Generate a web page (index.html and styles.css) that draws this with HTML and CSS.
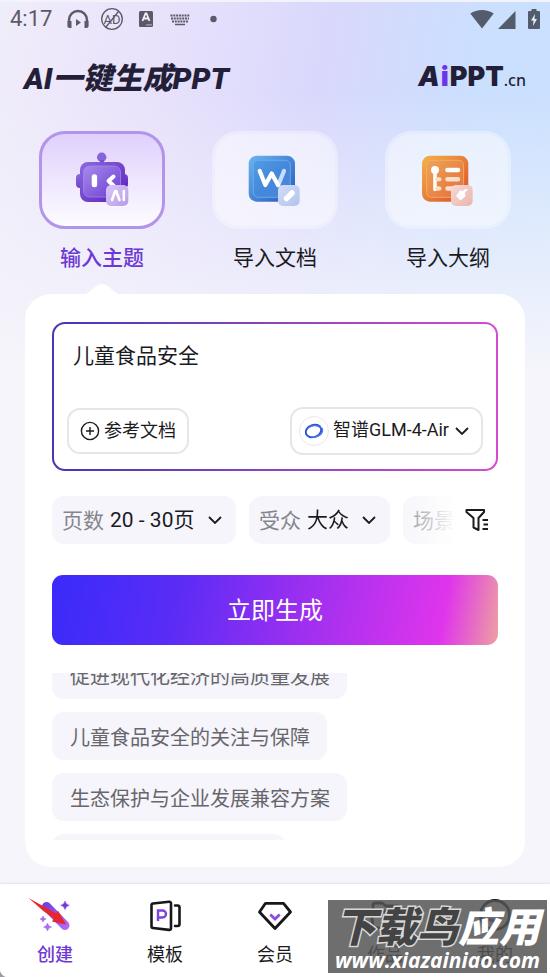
FILE: index.html
```html
<!DOCTYPE html>
<html lang="zh-CN">
<head>
<meta charset="utf-8">
<meta name="viewport" content="width=device-width, initial-scale=1">
<title>AI一键生成PPT</title>
<link rel="stylesheet" href="styles.css">
</head>
<body>
<div class="app">
  <div class="status">
    <span class="clock">4:17</span>
    <div class="status-left">
      <svg width="24" height="24" viewBox="0 0 24 24"><path d="M3 20V13a9 9 0 0 1 18 0v7" fill="none" stroke="currentColor" stroke-width="2.4"/><path d="M1.500 14h4v7h-2a2 2 0 0 1-2-2zM22.500 14h-4v7h2a2 2 0 0 0 2-2zM10 12l5 3.500-5 3.500z" fill="currentColor"/></svg>
      <svg width="24" height="24" viewBox="0 0 24 24" fill="none" stroke="currentColor" stroke-width="1.300"><circle cx="12" cy="12" r="10.300"/><path d="M18.500 4.500 6 20"/><text x="12" y="16.500" class="ad">AD</text></svg>
      <svg width="24" height="24" viewBox="0 0 24 24"><rect x="5" y="4" width="14" height="16" rx="1.500" fill="currentColor"/><path d="m8.500 14 3-7.500h1l3 7.500M9.500 11.500h5" fill="none" stroke="#f0edfb" stroke-width="1.800"/><path d="M12.500 17.800h1m1 0h1m1 0h1" stroke="#f0edfb" stroke-width="1.300"/></svg>
      <svg width="24" height="24" viewBox="0 0 24 24" fill="none" stroke="currentColor"><path d="M2.500 8.500h19M3 11.500h18M4 14.500h16" stroke-width="2" stroke-dasharray="2 .8"/><path d="M7 17.500h10" stroke-width="1.600"/></svg>
      <svg width="24" height="24" viewBox="0 0 24 24"><circle cx="11.500" cy="12" r="3.200" fill="currentColor"/></svg>
    </div>
    <div class="status-right">
      <svg width="24" height="22" viewBox="0 0 24 22"><path d="M12 20.500.3 5.500C7 .8 17 .8 23.700 5.500z" fill="currentColor"/></svg>
      <svg width="18" height="22" viewBox="0 0 18 22"><path d="M17.500 3v18H0z" fill="currentColor"/></svg>
      <svg class="battery" width="12" height="22" viewBox="0 0 12 22"><path d="M3.500 1h5v2H11q1 0 1 1v16q0 1-1 1H1q-1 0-1-1V4q0-1 1-1h2.500z" fill="currentColor"/><path d="M7 6 3 12.500h2.500L5 18l4-7H6.500z" fill="#e5f0ff"/></svg>
    </div>
  </div>

  <header class="head">
    <h1 class="title">AI一键生成PPT</h1>
    <div class="brand"><span class="brand-a">A</span><span class="brand-i">i</span>PPT<span class="brand-cn">.cn</span></div>
  </header>

  <div class="modes">
    <button class="mode mode-on">
      <span class="tile">
        <svg width="56" height="56" viewBox="0 0 56 56">
          <defs>
            <linearGradient id="p1" x1="0" y1="0" x2="1" y2="1"><stop offset="0" stop-color="#8b6ae2"/><stop offset="1" stop-color="#5b22b8"/></linearGradient>
            <linearGradient id="p2" x1="0" y1="0" x2="1" y2="1"><stop offset="0" stop-color="#a78bec"/><stop offset="1" stop-color="#6b3cd0"/></linearGradient>
            <linearGradient id="p3" x1="0" y1="0" x2="1" y2="1"><stop offset="0" stop-color="#d9c8f8"/><stop offset="1" stop-color="#b99be9"/></linearGradient>
          </defs>
          <circle cx="27.700" cy="5.200" r="4.700" fill="#8865d6"/><path d="M26 8h4v4h-4z" fill="#7650cf"/>
          <rect x="2" y="22" width="52" height="14" rx="4" fill="url(#p1)"/>
          <rect x="6" y="10" width="45" height="40" rx="8" fill="url(#p1)"/>
          <rect x="9.500" y="14" width="37" height="31" rx="6" fill="url(#p2)" stroke="#a78ceb" stroke-width=".7"/>
          <rect x="17.700" y="22.300" width="5.400" height="13" rx="2.500" fill="#fff"/>
          <path d="m39.500 24.500-5 4.500 5 4.500" fill="none" stroke="#fff" stroke-width="4" stroke-linecap="round" stroke-linejoin="round"/>
          <rect x="32" y="33" width="22.300" height="21" rx="5" fill="url(#p3)"/>
          <path d="m38 48 3.200-9h1l3.300 9M49.800 39v9" fill="none" stroke="#fff" stroke-width="2.600" stroke-linecap="round" stroke-linejoin="round"/>
        </svg>
      </span>
      <span class="mode-name">输入主题</span>
    </button>
    <button class="mode">
      <span class="tile">
        <svg width="56" height="56" viewBox="0 0 56 56">
          <defs>
            <linearGradient id="b1" x1="0" y1="0" x2="1" y2="1"><stop offset="0" stop-color="#6bb5ef"/><stop offset="1" stop-color="#2459bd"/></linearGradient>
            <linearGradient id="b2" x1="0" y1="0" x2="1" y2="1"><stop offset="0" stop-color="#4f9de6"/><stop offset=".5" stop-color="#4588da"/><stop offset="1" stop-color="#4b83dc"/></linearGradient>
            <linearGradient id="b3" x1="0" y1="0" x2="1" y2="1"><stop offset="0" stop-color="#d3ddf8"/><stop offset="1" stop-color="#b3c2ee"/></linearGradient>
          </defs>
          <rect x="1.700" y="3.700" width="46.300" height="46" rx="8" fill="url(#b1)"/>
          <rect x="6.300" y="8.300" width="37" height="37" rx="5" fill="url(#b2)" stroke="#72b0ef" stroke-width=".8"/>
          <path d="m31.300 33 5.700-14" fill="none" stroke="#c7def8" stroke-width="4.200" stroke-linecap="round"/>
          <path d="m12.700 19 5.600 14 6.400-11.500L31 33" fill="none" stroke="#fff" stroke-width="4.200" stroke-linecap="round" stroke-linejoin="round"/>
          <rect x="31" y="33" width="21.700" height="21" rx="5" fill="url(#b3)"/>
          <path d="m39.500 46.500 5.500-5.500" stroke="#fff" stroke-width="5.500" stroke-linecap="round"/>
        </svg>
      </span>
      <span class="mode-name">导入文档</span>
    </button>
    <button class="mode">
      <span class="tile">
        <svg width="56" height="56" viewBox="0 0 56 56">
          <defs>
            <linearGradient id="o1" x1="0" y1="0" x2="1" y2="1"><stop offset="0" stop-color="#f4b24a"/><stop offset="1" stop-color="#da4d26"/></linearGradient>
            <linearGradient id="o2" x1="0" y1="0" x2="1" y2="1"><stop offset="0" stop-color="#efa353"/><stop offset="1" stop-color="#e3703c"/></linearGradient>
            <linearGradient id="o3" x1="0" y1="0" x2="1" y2="1"><stop offset="0" stop-color="#f6d9d6"/><stop offset="1" stop-color="#eab5ad"/></linearGradient>
          </defs>
          <rect x="2" y="3.700" width="46.300" height="46" rx="8" fill="url(#o1)"/>
          <rect x="6.600" y="8.300" width="37" height="37" rx="5" fill="url(#o2)" stroke="#f3b56b" stroke-width=".8"/>
          <circle cx="15" cy="18" r="4" fill="#fff"/>
          <path d="M15 18v19.500M15 36.500h4" stroke="#fff" stroke-width="3.600" stroke-linecap="round"/>
          <path d="M17 27.300h2.500M17 36.500h2.500" stroke="#fbe0cc" stroke-width="4" stroke-linecap="round"/>
          <path d="M27.500 18H38" stroke="#fff" stroke-width="4.600" stroke-linecap="round"/>
          <path d="M27.500 27.300H38M27.500 36.500H36" stroke="#fbdfcc" stroke-width="4.600" stroke-linecap="round"/>
          <rect x="31" y="33" width="21.700" height="21" rx="5" fill="url(#o3)"/>
          <path d="m36.500 44 4-5.500 1 1.500q2.500-2.500 6-2.500-3 2-3.500 5l1.500 1-5 4.500z" fill="#fff" stroke="#fff" stroke-linejoin="round"/>
        </svg>
      </span>
      <span class="mode-name">导入大纲</span>
    </button>
  </div>

  <main class="panel">
    <svg class="notch" width="42" height="14" viewBox="0 0 42 14"><path d="M0 14Q4 13 8 10L16 3.500Q21 0 26 3.500L34 10Q38 13 42 14z" fill="#fff"/></svg>

    <div class="prompt">
      <textarea class="topic" rows="1" aria-label="主题">儿童食品安全</textarea>
      <div class="prompt-row">
        <button class="pill">
          <svg width="20" height="20" viewBox="0 0 20 20" fill="none" stroke="currentColor" stroke-width="1.400"><circle cx="10" cy="10" r="8.600"/><path d="M10 6v8M6 10h8"/></svg>
          <span class="pill-text">参考文档</span>
        </button>
        <label class="pill pill-model">
          <span class="model-logo"><svg width="20" height="18" viewBox="0 0 20 18" fill="none" stroke="#2b50d8"><ellipse cx="9.500" cy="9" rx="8" ry="6" transform="rotate(-20 9.500 9)" stroke-width="2"/><path d="M4 6q7-5 13 0M18 6q2 5-4 8-4 2-7 1" stroke="#4f75e6" stroke-width="1.400"/></svg></span>
          <select class="model pill-text" aria-label="模型"><option>智谱GLM-4-Air</option></select>
          <svg class="chev" width="14" height="8" viewBox="0 0 14 8"><path d="m1 1 6 6 6-6"/></svg>
        </label>
      </div>
    </div>

    <div class="filters">
      <div class="filter-scroll">
        <label class="filter"><span class="filter-name">页数</span>
          <select class="pick"><option>20 - 30页</option></select>
          <svg class="chev" width="14" height="8" viewBox="0 0 14 8"><path d="m1 1 6 6 6-6"/></svg>
        </label>
        <label class="filter"><span class="filter-name">受众</span>
          <select class="pick"><option>大众</option></select>
          <svg class="chev" width="14" height="8" viewBox="0 0 14 8"><path d="m1 1 6 6 6-6"/></svg>
        </label>
        <button class="filter filter-more"><span class="filter-name">场景</span></button>
      </div>
      <button class="funnel" aria-label="筛选">
        <svg width="24" height="24" viewBox="0 0 24 24" fill="none" stroke="currentColor" stroke-width="2" stroke-linejoin="round"><path d="M1.500 2h17.500v2l-5.500 6v12l-5-2.500V10L1.500 4z"/><path d="M17.500 12H23M18.500 16.500H23M17.500 21H23"/></svg>
      </button>
    </div>

    <button class="generate">立即生成</button>

    <div class="ideas">
      <button class="idea">促进现代化经济的高质量发展</button>
      <button class="idea">儿童食品安全的关注与保障</button>
      <button class="idea">生态保护与企业发展兼容方案</button>
      <span class="idea idea-next"></span>
    </div>
  </main>

  <nav class="tabs">
    <a class="tab tab-on" href="#create">
      <svg width="56" height="40" viewBox="0 0 56 40">
        <defs><linearGradient id="n1" gradientUnits="userSpaceOnUse" x1="17" y1="8" x2="40" y2="32"><stop offset="0" stop-color="#7040e0"/><stop offset="1" stop-color="#b26af5"/></linearGradient></defs>
        <path d="M19.500 10.500 38 29.500" stroke="url(#n1)" stroke-width="9" stroke-linecap="round"/>
        <path d="M38 5q.8 3.700 4.300 4.300-3.500.6-4.300 4.300-.8-3.700-4.300-4.300 3.500-.6 4.300-4.300z" fill="#6a3ae0" stroke="#6a3ae0" stroke-width=".5"/>
        <path d="M16 20q.5 2.500 3 3-2.500.5-3 3-.5-2.500-3-3 2.500-.5 3-3zM20.500 27q.7 3.300 4 4-3.300.7-4 4-.7-3.300-4-4 3.300-.7 4-4z" fill="#a76af0" stroke="#a76af0" stroke-width=".6"/>
        <path d="M1.500 2 29.500 17.500l1.500-3L39 28.500l-14-3 2-3L17 15.500z" fill="#e8262b"/>
      </svg>
      创建
    </a>
    <a class="tab" href="#templates">
      <svg width="56" height="40" viewBox="0 0 56 40" fill="none" stroke="#17171b" stroke-width="2.600" stroke-linejoin="round" stroke-linecap="round"><path d="m16 7.500 16-1.700q2-.2 2 1.800v24.600q0 2-2 1.700L16 32q-1.500-.2-1.500-1.800V9.300q0-1.600 1.500-1.800zM38 9.500h2.500q2 0 2 2V28q0 2-2 2H38"/><path d="M21 25V14.500h4.500a3.300 3.300 0 0 1 0 7H21" stroke="#7b43e0" stroke-width="2.400" stroke-linecap="butt" stroke-linejoin="miter"/></svg>
      模板
    </a>
    <a class="tab" href="#vip">
      <svg width="56" height="40" viewBox="0 0 56 40" fill="none" stroke="#17171b" stroke-width="2.800" stroke-linejoin="round" stroke-linecap="round"><path d="M18.500 7.300h18L43.500 16 28 32.500 12.500 16z"/><path d="m23.300 18.500 4.700 4.500 4.700-4.500" stroke="#8a4be8" stroke-linecap="butt" stroke-linejoin="miter"/></svg>
      会员
    </a>
    <a class="tab" href="#works">
      <svg width="56" height="40" viewBox="0 0 56 40" fill="none" stroke="#17171b" stroke-width="2.800" stroke-linejoin="round"><path d="M16 14V9q0-2 2-2h7l4 3h11q2 0 2 2v3M14 15h29l-2 15q0 2-2 2H18q-2 0-2-2z"/><path d="M23 20h10" stroke="#7b43e0"/></svg>
      作品
    </a>
    <a class="tab" href="#me">
      <svg width="56" height="40" viewBox="0 0 56 40" fill="none" stroke="#17171b" stroke-width="2.800"><circle cx="28" cy="19" r="14.500"/><path d="M22 23q6 4 12 0" stroke="#7b43e0"/></svg>
      我的
    </a>
    <div class="mark">
      <div class="mark-name"><span class="mark-dark">下载鸟</span>应用</div>
      <div class="mark-url">www.xiazainiao.com</div>
    </div>
  </nav>
</div>
</body>
</html>
```

FILE: styles.css
```css
* {
  box-sizing: border-box;
}

html {
  background: #9d9da0;
}

body {
  margin: 0;
  font-family: Roboto, "Noto Sans CJK SC", sans-serif;
  font-size: 21px;
  color: #1b1b1f;
}

button,
select,
textarea {
  margin: 0;
  padding: 0;
  border: 0;
  background: none;
  font: inherit;
  color: inherit;
}

svg {
  display: block;
  flex: none;
}

.app {
  display: flex;
  flex-direction: column;
  height: 100vh;
  min-height: 900px;
  overflow: hidden;
  border-top: 2px solid #f3f3fb;
  border-radius: 0 0 0 8px;
  background:
    linear-gradient(to bottom, rgba(245, 245, 251, 0) 90px, #f5f5fb 370px) no-repeat,
    linear-gradient(100deg, #f0edfa 0%, #e9e2fb 22%, #d9d8fc 46%, #cbdffe 68%, #c9e2ff 100%);
}

.status {
  display: flex;
  align-items: center;
  height: 34px;
  padding: 0 10px;
  color: #5c5a68;
}

.clock {
  width: 56px;
  font-size: 22px;
  line-height: 34px;
}

.status-left {
  display: flex;
  gap: 10px;
}

.ad {
  font-size: 13px;
  text-anchor: middle;
  stroke-width: 0;
  fill: currentColor;
}

.status-right {
  display: flex;
  gap: 4px;
  margin-left: auto;
  color: #525c6b;
}

.battery {
  margin-left: 8px;
}

.head {
  display: flex;
  align-items: center;
  justify-content: space-between;
  height: 82px;
  padding: 3px 24px 0;
}

.title {
  margin: 0;
  font-size: 30px;
  font-weight: 900;
  font-style: italic;
  line-height: 36px;
  color: #231f38;
}

.brand {
  font-family: Inter, sans-serif;
  font-size: 27px;
  font-weight: 900;
  line-height: 36px;
  color: #231f38;
}

.brand-a {
  font-style: italic;
}

.brand-i {
  margin: 0 1px;
  color: #6c35e8;
}

.brand-cn {
  font-family: "Noto Sans", sans-serif;
  font-size: 16px;
  font-weight: 500;
}

.modes {
  display: flex;
  justify-content: space-between;
  padding: 13px 39px 0;
}

.mode {
  display: flex;
  flex-direction: column;
  align-items: center;
  gap: 13px;
}

.tile {
  display: grid;
  place-items: center;
  width: 126px;
  height: 98px;
  border: 3px solid rgba(255, 255, 255, .35);
  border-radius: 26px;
  background: rgba(255, 255, 255, .5);
  background-clip: padding-box;
}

.mode-on .tile {
  border-color: #b295ea;
  background: linear-gradient(#e0d0fd, #fdfcff);
}

.mode-name {
  line-height: 32px;
}

.mode-on .mode-name {
  font-weight: 500;
  color: #6d38d4;
}

.panel {
  position: relative;
  display: flex;
  flex: 1;
  flex-direction: column;
  min-height: 0;
  margin: 20px 25px 17px;
  padding: 28px 27px 27px;
  border-radius: 26px;
  background: #fff;
}

.notch {
  position: absolute;
  top: -12px;
  left: 56px;
}

.prompt {
  display: flex;
  flex-direction: column;
  justify-content: space-between;
  height: 149px;
  padding: 16px 13px 14px;
  border: 2px solid transparent;
  border-radius: 13px;
  background:
    linear-gradient(#fff, #fff) padding-box,
    linear-gradient(90deg, #4336b8, #8b45bd 50%, #d44ccf) border-box;
}

.topic {
  display: block;
  padding: 0 6px;
  line-height: 32px;
  resize: none;
  overflow: hidden;
  outline: 0;
}

.prompt-row {
  display: flex;
  align-items: center;
  justify-content: space-between;
}

.pill {
  display: flex;
  align-items: center;
  gap: 4px;
  height: 46px;
  padding: 0 11px;
  border: 2px solid #e6e6e8;
  border-radius: 13px;
  font-size: 18px;
}

.pill-text {
  padding-bottom: 4px;
}

.pill-model {
  height: 48px;
  padding: 0 12px 0 7px;
}

.model-logo {
  display: grid;
  place-items: center;
  width: 30px;
  height: 30px;
  border: 1px solid #e8e8ee;
  border-radius: 50%;
}

.model,
.pick {
  appearance: none;
  outline: 0;
}

.model {
  margin-right: 2px;
}

.chev {
  fill: none;
  stroke: #1b1b1f;
  stroke-width: 1.8;
  pointer-events: none;
}

.filters {
  display: flex;
  align-items: center;
  margin-top: 25px;
}

.filter-scroll {
  display: flex;
  flex: 1;
  gap: 13px;
  min-width: 0;
  overflow: hidden;
  mask-image: linear-gradient(to right, #000 calc(100% - 60px), transparent);
}

.filter {
  display: flex;
  flex: none;
  align-items: center;
  height: 48px;
  padding: 0 14px 0 10px;
  border-radius: 13px;
  background: #f5f5fb;
  color: #85858c;
}

.filter-name {
  padding-bottom: 2px;
}

.pick {
  margin: 0 13px 0 6px;
  color: #1b1b1f;
}

.filter-more {
  padding-right: 40px;
}

.funnel {
  display: grid;
  place-items: center;
  width: 42px;
  height: 48px;
}

.generate {
  flex: none;
  height: 70px;
  margin-top: 31px;
  padding-bottom: 3px;
  border-radius: 11px;
  background: linear-gradient(100deg, #3a2bfa 0%, #5a2cf6 28%, #9a2ff0 55%, #df35ec 87%, #e66dc4 94%, #eda2a2 100%);
  font-size: 24px;
  color: #fff;
}

.ideas {
  display: flex;
  flex: 1;
  flex-direction: column;
  align-items: flex-start;
  gap: 13px;
  min-height: 0;
  margin-top: 28px;
  overflow: hidden;
}

.idea {
  flex: none;
  height: 48px;
  padding: 0 17px 0 18px;
  border-radius: 12px;
  background: #f5f5fb;
  font-size: 20px;
  color: #66666b;
}

.idea:first-child {
  margin-top: -22px;
}

.idea-next {
  width: 234px;
}

.tabs {
  position: relative;
  display: flex;
  flex: none;
  height: 93px;
  padding-top: 12px;
  background: #fff;
  box-shadow: 0 -1px 2px rgba(0, 0, 0, .08);
}

.tab {
  display: flex;
  flex: 1;
  flex-direction: column;
  align-items: center;
  gap: 5px;
  font-size: 18px;
  line-height: 28px;
  color: #1b1b1f;
  text-decoration: none;
}

.tab-on {
  font-weight: 500;
  color: #6d38d4;
}

.mark {
  position: absolute;
  right: 3px;
  bottom: 4px;
  width: 219px;
  height: 73px;
  overflow: hidden;
  background: rgba(85, 85, 85, .85);
  color: #fff;
  font-style: italic;
  font-weight: 900;
  text-align: center;
  white-space: nowrap;
}

.mark-name {
  padding-top: 7px;
  font-size: 41px;
  line-height: 42px;
}

.mark-dark {
  color: #444;
  paint-order: stroke fill;
  -webkit-text-stroke: 3px #d8d8d8;
}

.mark-url {
  font-family: "Open Sans", sans-serif;
  font-size: 21px;
  font-weight: 700;
  line-height: 22px;
}
```
